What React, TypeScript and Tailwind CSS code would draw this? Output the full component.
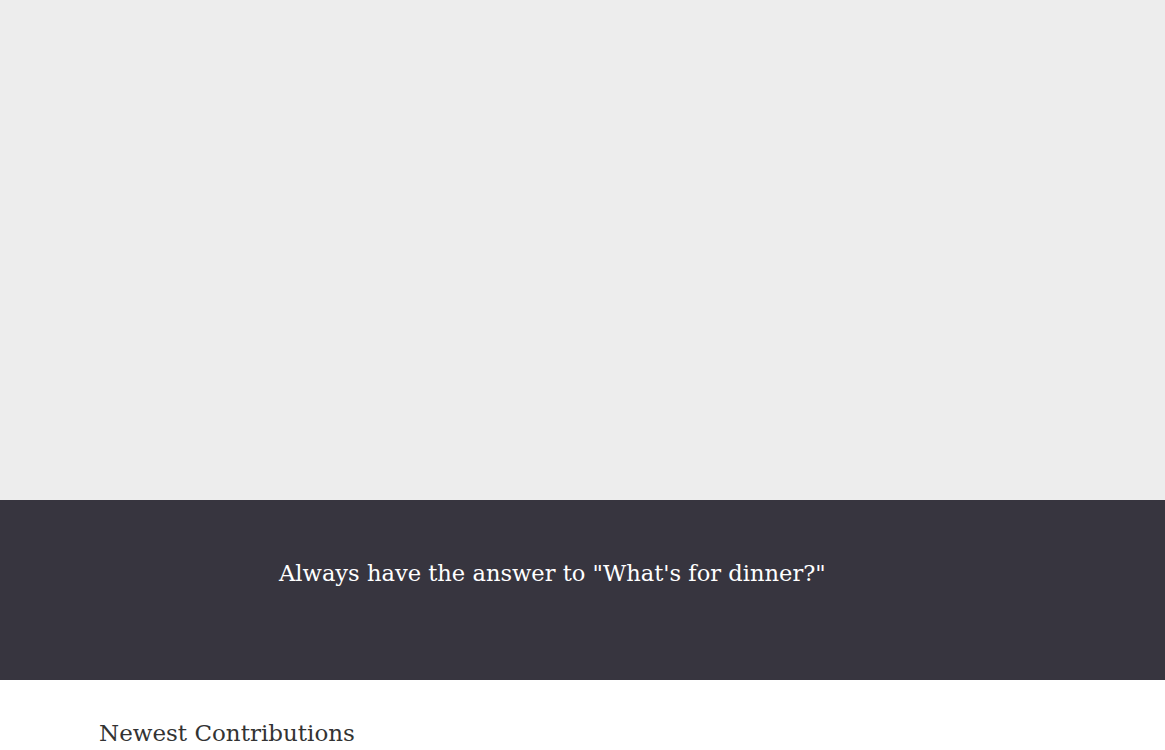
export default function App() {
  return (
    <div className="min-h-screen bg-white font-['DejaVu_Serif',serif]">
      {/* Hero placeholder */}
      <div className="h-[500px] bg-[#ededed]"></div>

      {/* Tagline band */}
      <div className="h-[180px] bg-[#37353f] pl-[279px] pt-[57px]">
        <p className="text-[22.6px] leading-[32px] text-white">Always have the answer to "What's for dinner?"</p>
      </div>

      {/* Newest */}
      <div className="px-[99px] pt-[37px]">
        <h2 className="text-[23px] leading-[32px] text-[#333333]">Newest Contributions</h2>
      </div>
    </div>
  );
}
